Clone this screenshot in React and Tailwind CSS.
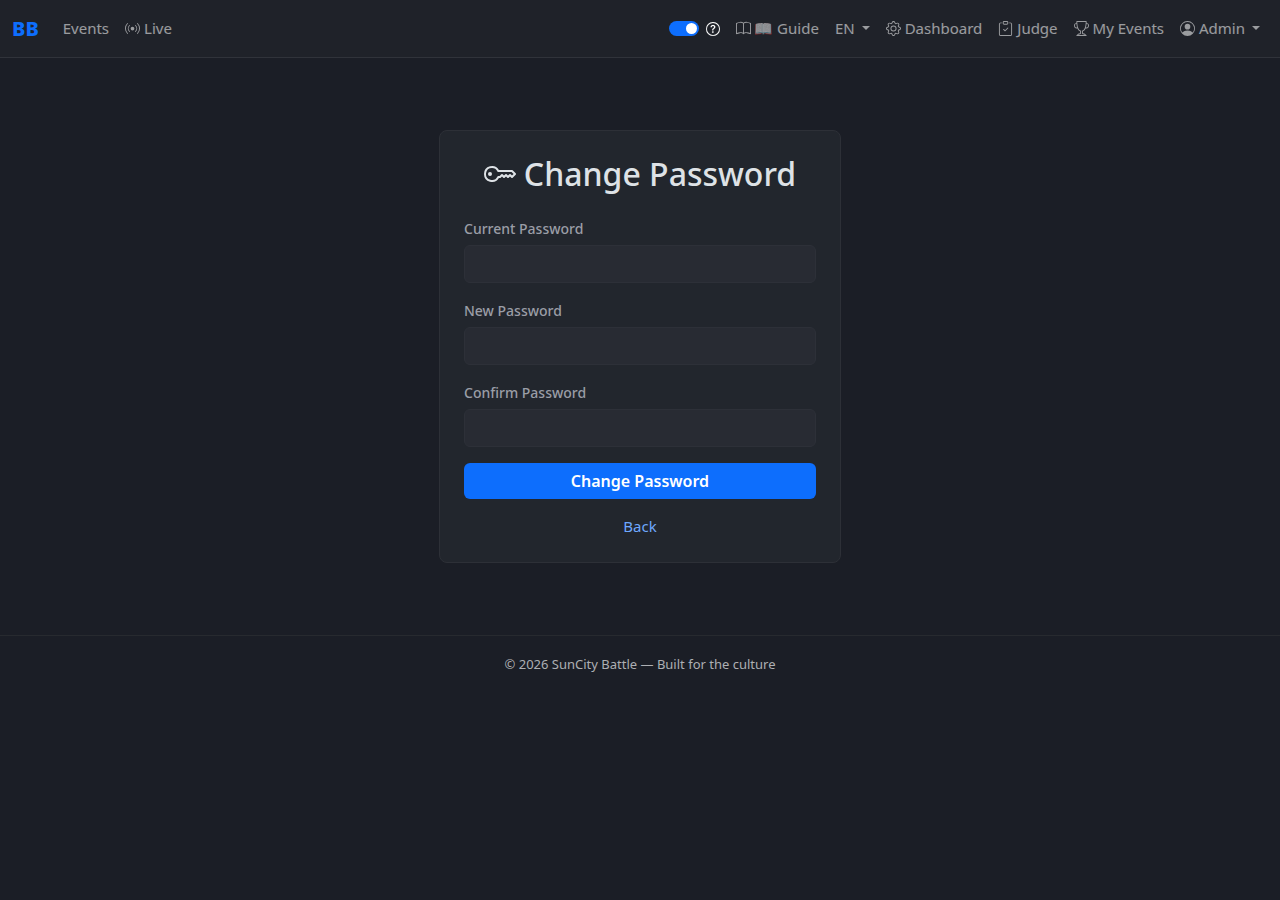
import {
  BsBroadcast,
  BsBook,
  BsGear,
  BsClipboardCheck,
  BsTrophy,
  BsPersonCircle,
  BsKey,
  BsQuestionCircle,
} from "react-icons/bs";

const fields = [
  { id: "current-password", label: "Current Password" },
  { id: "new-password", label: "New Password" },
  { id: "confirm-password", label: "Confirm Password" },
];

function Caret() {
  return (
    <span className="ml-[7px] inline-block border-x-4 border-t-4 border-x-transparent border-t-current align-[4px]" />
  );
}

function NavItem({ icon: Icon, children }) {
  return (
    <a href="#" className="flex items-center gap-1 px-2 py-2 whitespace-nowrap hover:text-white">
      {Icon && <Icon className="size-[15px]" />}
      {children}
    </a>
  );
}

export default function App() {
  return (
    <div className="min-h-screen bg-[#1b1e26] font-['Noto_Sans','Noto_Color_Emoji',sans-serif] text-[15px] leading-[23px] text-[#dee2e6]">
      <nav className="flex items-center border-b border-[#30333a] bg-[#1f2229] px-3 py-[9px] text-white/55">
        <a href="#" className="mr-4 text-xl leading-[30px] font-extrabold text-[#0d6efd]">
          BB
        </a>
        <div className="flex flex-1 items-center">
          <NavItem>Events</NavItem>
          <NavItem icon={BsBroadcast}>Live</NavItem>
        </div>
        <div className="flex items-center">
          <label className="mr-2 flex cursor-pointer items-center gap-[7px] text-white">
            <input type="checkbox" role="switch" defaultChecked aria-label="Help hints" className="peer sr-only" />
            <span className="flex h-[15px] w-[30px] items-center justify-end rounded-full bg-[#0d6efd] px-[2px]">
              <span className="size-[11px] rounded-full bg-white" />
            </span>
            <BsQuestionCircle className="size-[14px]" strokeWidth="0.15" />
          </label>
          <NavItem icon={BsBook}>📖 Guide</NavItem>
          <button type="button" className="px-2 py-2">
            EN
            <Caret />
          </button>
          <NavItem icon={BsGear}>Dashboard</NavItem>
          <NavItem icon={BsClipboardCheck}>Judge</NavItem>
          <NavItem icon={BsTrophy}>My Events</NavItem>
          <button type="button" className="flex items-center gap-1 px-2 py-2">
            <BsPersonCircle className="size-[15px]" />
            <span>
              Admin
              <Caret />
            </span>
          </button>
        </div>
      </nav>

      <main className="px-3 py-[72px]">
        <section className="mx-auto w-full max-w-[402px] rounded-lg border border-[#2d3037] bg-[#22262d] p-6">
          <h1 className="mb-6 flex items-center justify-center gap-2 text-[32px] leading-[38px] font-medium">
            <BsKey className="size-8" />
            Change Password
          </h1>
          <form onSubmit={(e) => e.preventDefault()}>
            {fields.map((f) => (
              <div key={f.id} className="mb-4">
                <label htmlFor={f.id} className="mb-1 block text-sm leading-6 font-medium text-[#9a9da6]">
                  {f.label}
                </label>
                <input
                  id={f.id}
                  type="password"
                  className="block h-[38px] w-full rounded-md border border-[#2d3038] bg-[#282b33] px-3 outline-none focus:border-[#0d6efd]"
                />
              </div>
            ))}
            <button
              type="submit"
              className="h-9 w-full rounded-md bg-[#0d6efd] text-base font-semibold text-white hover:bg-[#0b5ed7]"
            >
              Change Password
            </button>
          </form>
          <p className="mt-4 text-center">
            <a href="#" className="text-[#6ea8fe]">
              Back
            </a>
          </p>
        </section>
      </main>

      <footer className="border-t border-[#272a2f] px-3 py-[18px] text-center text-[13px] leading-5 text-[#adafb3]">
        © 2026 SunCity Battle — Built for the culture
      </footer>
    </div>
  );
}
